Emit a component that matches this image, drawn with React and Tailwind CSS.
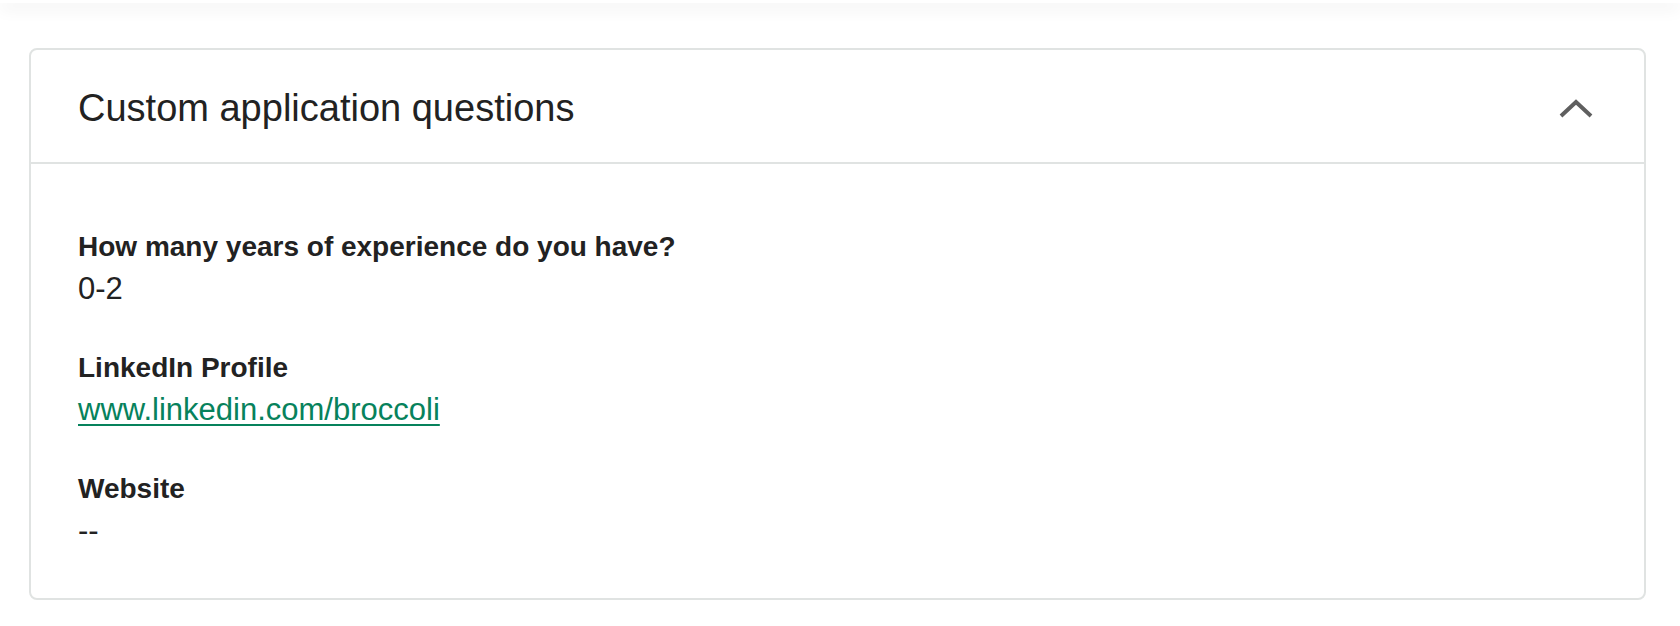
import React from "react";

const font = { fontFamily: '"Liberation Sans", Arial, sans-serif' };

function Item({ label, children, last }) {
  return (
    <div className={last ? "" : "mb-[38px]"}>
      <div className="text-[28px] leading-[36px] font-bold text-[#222222]">{label}</div>
      <div className="text-[31px] leading-[47px] text-[#222222]">{children}</div>
    </div>
  );
}

export default function App() {
  return (
    <div className="w-full h-[626px] bg-white overflow-hidden" style={font}>
      <div className="h-[3px] bg-white shadow-[0_4px_16px_rgba(0,0,0,0.16)]" />
      <div className="mt-[45px] ml-[29px] mr-[34px] border-2 border-[#e0e3e2] rounded-[8px] bg-white">
        <div className="h-[114px] flex items-center justify-between pt-[4px] pl-[47px] pr-[51px] border-b-2 border-[#e0e3e2]">
          <h2 className="text-[38px] font-normal text-[#222222]">Custom application questions</h2>
          <svg width="34" height="20" viewBox="0 0 34 20" fill="none">
            <polyline points="2,18 17,4 32,18" stroke="#5f5f5f" strokeWidth="4" strokeLinecap="butt" strokeLinejoin="miter" />
          </svg>
        </div>
        <div className="pl-[47px] pr-[51px] pt-[65px] pb-[44px]">
          <Item label="How many years of experience do you have?">0-2</Item>
          <Item label="LinkedIn Profile">
            <a href="#" className="text-[#07825c] underline decoration-[2px] underline-offset-[4px]">www.linkedin.com/broccoli</a>
          </Item>
          <Item label="Website" last>--</Item>
        </div>
      </div>
    </div>
  );
}
